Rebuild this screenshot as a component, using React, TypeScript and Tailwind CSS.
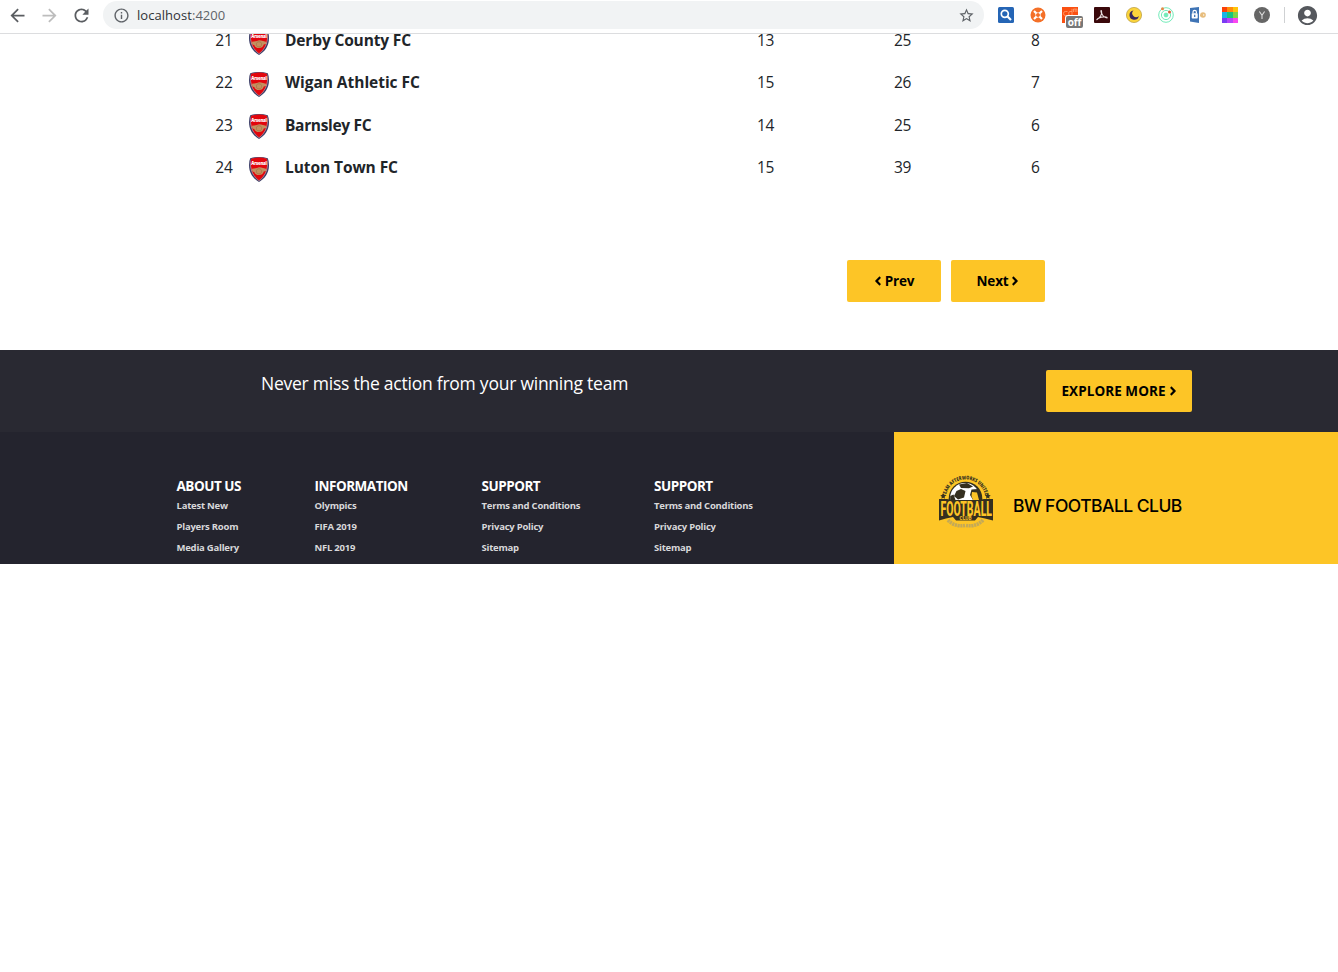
import React from "react";
import {
  MdArrowBack,
  MdArrowForward,
  MdRefresh,
  MdInfoOutline,
  MdStarBorder,
  MdAccountCircle,
} from "react-icons/md";
import { FaAngleLeft, FaAngleRight } from "react-icons/fa";

const teams = [
  { pos: 21, name: "Derby County FC", a: 13, b: 25, c: 8, track: "tracking-[-0.15px]" },
  { pos: 22, name: "Wigan Athletic FC", a: 15, b: 26, c: 7, track: "tracking-[-0.03px]" },
  { pos: 23, name: "Barnsley FC", a: 14, b: 25, c: 6, track: "tracking-[-0.32px]" },
  { pos: 24, name: "Luton Town FC", a: 15, b: 39, c: 6, track: "tracking-[-0.08px]" },
];

const columns = [
  { title: "ABOUT US", width: "w-[138px]", links: ["Latest New", "Players Room", "Media Gallery"] },
  { title: "INFORMATION", width: "w-[167px]", links: ["Olympics", "FIFA 2019", "NFL 2019"] },
  { title: "SUPPORT", width: "w-[172.5px]", links: ["Terms and Conditions", "Privacy Policy", "Sitemap"] },
  { title: "SUPPORT", width: "w-[150px]", links: ["Terms and Conditions", "Privacy Policy", "Sitemap"] },
];

function Crest() {
  return (
    <svg width="20" height="25" viewBox="0 0 20 25" className="block">
      <path d="M1.2 1.2Q5 0 10 0T18.8 1.2Q20 4 20 8C20 17 15 22 10 25C5 22 0 17 0 8Q0 4 1.2 1.2Z" fill="#3d3f68" />
      <path d="M2 2Q5 .8 10 .8T18 2Q18.900 5 18.800 8C18.500 16 14 21 10 23.900C6 21 1.500 16 1.200 8Q1.100 5 2 2Z" fill="#c98d96" />
      <path d="M2.200 1.800Q6 .6 10 .6T17.800 1.800Q18.400 5 18 9C17.300 16 13.700 20.700 10 23.300C6.300 20.700 2.700 16 2 9Q1.600 5 2.200 1.800Z" fill="#e2060d" />
      <text x="10" y="8" textAnchor="middle" textLength="15.500" lengthAdjust="spacingAndGlyphs" fontSize="5.500" fontWeight="800" fontFamily="Open Sans, sans-serif" fill="#fff">Arsenal</text>
      <path d="M3 11.800L8 11Q10 9.600 12 10.500L17 11.800V14L14.800 14.500Q13.800 18 10 18T5.400 15.200L3.200 14.200Z" fill="#c4905f" />
      <path d="M7.500 14.300a2.600 2 0 1 0 5 0a2.600 2 0 1 0-5 0" fill="none" stroke="#a06c40" strokeWidth=".6" />
    </svg>
  );
}

function ClubLogo() {
  return (
    <svg width="56" height="54" viewBox="0 0 56 54" className="block">
      <defs>
        <path id="arc" d="M7.800 21.500A19.900 19.900 0 0 1 47.200 21.500" />
      </defs>
      <text fontSize="5.200" fontWeight="800" fontFamily="Open Sans, sans-serif" fill="#35301f">
        <textPath href="#arc" textLength="56" lengthAdjust="spacingAndGlyphs">TEAM AFTERWORKS UNITED</textPath>
      </text>
      <circle cx="27.500" cy="23.500" r="16.800" fill="#35301f" />
      <circle cx="27" cy="23" r="14.900" fill="#fff" />
      <path d="M21 9.500L29 8L35 11.500L31 13.300L23 13ZM33.500 14.500L40 14L43 20V25H35L32 20ZM18.500 16L23 14L27.500 16L26 22.500L20 24.500L16 21ZM12.200 21L15.500 19.500L17.500 25H12.200Z" fill="#35301f" />
      <path d="M34 17L39 17.500L41 25H35L33.500 21Z" fill="#fdc526" />
      <path d="M5.200 18.200l.9 1.900 2 .2-1.500 1.400.4 2-1.800-1-1.800 1 .4-2-1.500-1.400 2-.2ZM49.800 18.200l.9 1.900 2 .2-1.500 1.400.4 2-1.800-1-1.800 1 .4-2-1.500-1.400 2-.2Z" fill="#35301f" />
      <path d="M1 24H9L14 25H41L46 24H55V45.500L47 43.500L40 42L37 45.500H18L15 42L8 43.500L1 45.500Z" fill="#35301f" />
      <text x="2.500" y="41.300" fontSize="21" fontWeight="800" fontFamily="Roboto, sans-serif" fill="#fdc526" textLength="51.500" lengthAdjust="spacingAndGlyphs">FOOTBALL</text>
      <text x="21.500" y="45.200" fontSize="5" fontWeight="700" fontFamily="Roboto, sans-serif" fill="#fdc526" textLength="12" lengthAdjust="spacingAndGlyphs">CLUB</text>
      <path d="M10 45Q16 52 27 50.500M45 45Q39 52 28 50.500" fill="none" stroke="#c3a958" strokeWidth="3.600" strokeDasharray="2.200 .6" />
    </svg>
  );
}

function Extensions() {
  return (
    <div className="flex items-center gap-4">
      <svg width="16" height="16" viewBox="0 0 16 16">
        <rect width="16" height="16" rx="1.500" fill="#2565b5" />
        <circle cx="6.800" cy="6.800" r="3.500" fill="none" stroke="#fff" strokeWidth="1.700" />
        <path d="M9.300 9.300L13 13" stroke="#fff" strokeWidth="2.200" />
      </svg>
      <svg width="16" height="16" viewBox="0 0 16 16">
        <circle cx="8" cy="8" r="7.500" fill="#f47028" />
        <path d="M4 4L6.500 6.500M12 4L9.500 6.500M4 12L6.500 9.500M12 12L9.500 9.500" stroke="#fff" strokeWidth="2.200" />
        <path d="M5.300 8L8 5.300L10.700 8L8 10.700Z" fill="none" stroke="#fff" strokeWidth=".8" />
        <circle cx="8" cy="8" r="1.600" fill="#f47028" />
      </svg>
      <div className="relative h-4 w-4">
        <svg width="16" height="16" viewBox="0 0 16 16">
          <rect width="16" height="16" fill="#fa5012" />
          <path d="M5.500 4.500H3.200Q1.500 4.500 1.500 6.500T3.200 8.600H5.500M10 1.800V8.600H8Q6.700 8.600 6.700 6.500T8 4.500H10M11.500 5V2h1.700v3M13.200 2h1.700v3" fill="none" stroke="#ffa274" strokeWidth=".8" />
        </svg>
        <div className="absolute left-[4px] top-[9px] flex h-[12px] w-[17px] items-center justify-center rounded-[2px] bg-[#777] text-[10px] font-bold leading-[12px] tracking-[-0.1px] text-white shadow-[0_0_0_1px_#fff]">
          off
        </div>
      </div>
      <svg width="16" height="16" viewBox="0 0 16 16">
        <rect width="16" height="16" rx="1" fill="#3a080b" />
        <path d="M3 12.500C6 11 8.500 7 7.500 4C7 2.700 6.500 4 7.500 6C8.500 8.500 11 11 13 11C14 10 9 9 5 11C3.500 11.800 2.500 13 3 12.500Z" fill="none" stroke="#e8dede" strokeWidth="1.100" />
      </svg>
      <svg width="16" height="16" viewBox="0 0 16 16">
        <circle cx="8" cy="8" r="7.600" fill="#fbd43b" stroke="#b69a3f" strokeWidth=".7" />
        <path d="M7.500 3.500A4.700 4.700 0 1 0 12.800 9A3.800 3.800 0 0 1 7.500 3.500Z" fill="#38285c" />
      </svg>
      <svg width="16" height="16" viewBox="0 0 16 16" fill="none" stroke="#73ebb9">
        <circle cx="8" cy="8" r="7.300" strokeWidth="1" />
        <circle cx="8" cy="8" r="4.600" strokeWidth="1" />
        <circle cx="8" cy="8" r="1.900" fill="#73ebb9" />
        <circle cx="4.500" cy="1.800" r="1.500" fill="#e58745" stroke="none" />
        <circle cx="11.500" cy="5" r="1.500" fill="#e35b36" stroke="none" />
      </svg>
      <svg width="16" height="16" viewBox="0 0 16 16">
        <path d="M0 1L9 0V16L0 14.500Z" fill="#3f74b5" />
        <rect x="1.700" y="6.300" width="6" height="5.200" rx=".7" fill="#fff" />
        <path d="M3 6.500V5a1.700 1.700 0 0 1 3.400 0V6.500" fill="none" stroke="#fff" strokeWidth="1.200" />
        <path d="M4.700 7.700v2.400" stroke="#3f74b5" strokeWidth="1.300" />
        <circle cx="13" cy="8" r="2.800" fill="#e7bd7d" />
        <path d="M10 8.500h3" stroke="#e7bd7d" strokeWidth="1.500" />
        <circle cx="13.700" cy="8" r=".7" fill="#fff" />
      </svg>
      <svg width="16" height="16" viewBox="0 0 16 16" shapeRendering="crispEdges">
        <path d="M0 0h5v5H0z" fill="#fb4208" />
        <path d="M5 0h6v5H5z" fill="#ff8c0a" />
        <path d="M11 0h5v5h-5z" fill="#ffc40a" />
        <path d="M0 5h5v6H0z" fill="#18b4e8" />
        <path d="M5 5h6v6H5z" fill="#16c67e" />
        <path d="M11 5h5v6h-5z" fill="#7ed548" />
        <path d="M0 11h5v5H0z" fill="#7a3cf2" />
        <path d="M5 11h6v5H5z" fill="#b645fa" />
        <path d="M11 11h5v5h-5z" fill="#fa47ef" />
      </svg>
      <svg width="16" height="16" viewBox="0 0 16 16">
        <circle cx="8" cy="8" r="8" fill="#666" />
        <path d="M5.400 4.500L8 8.200L10.600 4.500M8 8V12" fill="none" stroke="#ddd" strokeWidth="1.100" />
      </svg>
    </div>
  );
}

export default function App() {
  return (
    <div className="flex h-[972px] w-[1338px] flex-col overflow-hidden bg-white font-['Open_Sans',sans-serif] text-[#212529]">
      <header className="flex h-[34px] shrink-0 items-start border-b border-[#dcdddf] pt-px">
        <div className="flex h-7 items-center gap-[11px] pl-[6.5px] text-[#5a5d61]">
          <MdArrowBack size={21} />
          <MdArrowForward size={21} className="text-[#bdbdbd]" />
          <MdRefresh size={21} />
        </div>
        <div className="ml-[11.5px] flex h-7 w-[881px] items-center rounded-full bg-[#f1f3f4] pl-[9.5px] pr-[9.5px] text-[#5f6368]">
          <MdInfoOutline size={17} />
          <span className="ml-[7.5px] text-[13px] leading-5 tracking-[0.05px]">
            <span className="text-[#303236]">localhost</span>:4200
          </span>
          <MdStarBorder size={17} className="ml-auto" />
        </div>
        <div className="ml-[14px] flex h-7 items-center">
          <Extensions />
          <div className="ml-[14px] h-4 w-px bg-[#cfd1d3]" />
          <MdAccountCircle size={23} className="ml-[11px] text-[#55585d]" />
        </div>
      </header>

      <main className="flex h-[316px] shrink-0 flex-col overflow-hidden">
        <div className="-mt-[14.6px] shrink-0">
          {teams.map((t) => (
            <div key={t.pos} className="flex h-[42.33px] items-center text-[15.5px] tracking-[-0.25px]">
              <span className="w-[232.5px] text-right">{t.pos}</span>
              <span className="ml-[16.5px] mt-[3px] w-9">
                <Crest />
              </span>
              <span className={`w-[472px] font-bold ${t.track}`}>{t.name}</span>
              <span className="w-[137px]">{t.a}</span>
              <span className="w-[137px]">{t.b}</span>
              <span>{t.c}</span>
            </div>
          ))}
        </div>
        <div className="mt-[71.3px] flex gap-[10px] pl-[847px] text-[13.5px] font-bold tracking-[-0.2px] text-black">
          <button className="flex h-[42px] w-[94px] items-center justify-center gap-[3px] rounded-[2px] bg-[#fdc526]">
            <FaAngleLeft size={14} className="w-[8px]" /> Prev
          </button>
          <button className="flex h-[42px] w-[94px] items-center justify-center gap-[3px] rounded-[2px] bg-[#fdc526]">
            Next <FaAngleRight size={14} className="w-[8px]" />
          </button>
        </div>
      </main>

      <section className="flex h-[82px] shrink-0 items-start justify-between bg-[#292932] pl-[261px] pr-[146px]">
        <p className="mt-[20px] text-[17.5px] leading-[26px] tracking-[-0.24px] text-white">Never miss the action from your winning team</p>
        <button className="mt-5 flex h-[42px] w-[146px] items-center justify-center gap-[3px] rounded-[2px] bg-[#fdc526] text-[13.5px] font-bold tracking-[0.06px] text-black">
          EXPLORE MORE <FaAngleRight size={14} className="w-[8px]" />
        </button>
      </section>

      <footer className="flex h-[132px] shrink-0">
        <div className="flex w-[894px] bg-[#24242e] pl-[176.5px] pt-[44px]">
          {columns.map((c, i) => (
            <div key={i} className={c.width}>
              <h4 className="text-[13.5px] font-bold leading-5 tracking-[-0.48px] text-white">{c.title}</h4>
              <ul className="text-[9.5px] font-bold text-[#d8d8da]">
                {c.links.map((l) => (
                  <li key={l} className="h-[21px] leading-[19px] tracking-[-0.23px]">{l}</li>
                ))}
              </ul>
            </div>
          ))}
        </div>
        <div className="flex flex-1 items-start bg-[#fdc526] pl-[44px] pt-[43px]">
          <ClubLogo />
          <span className="ml-[19px] mt-[19px] font-['Inter',sans-serif] text-[17.5px] leading-6 tracking-[-0.53px] font-medium text-black">
            BW FOOTBALL CLUB
          </span>
        </div>
      </footer>
    </div>
  );
}
